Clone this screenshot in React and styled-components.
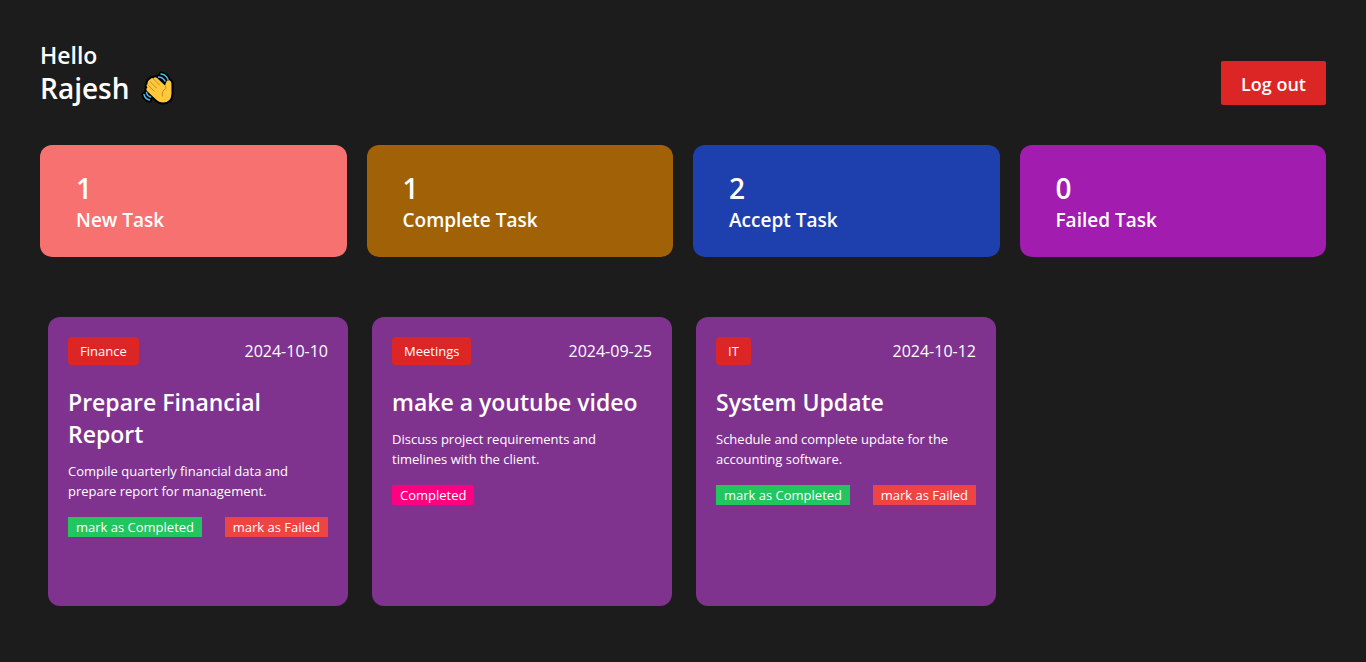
import React from "react";
import styled, { createGlobalStyle } from "styled-components";

const GlobalStyle = createGlobalStyle`
  *, *::before, *::after { box-sizing: border-box; margin: 0; }
  body {
    background: #1c1c1c;
    color: #fff;
    font-family: "Segoe UI", "Open Sans", "Noto Sans", sans-serif;
    font-size: 16px;
    line-height: 24px;
  }
  button { font: inherit; color: inherit; border: 0; cursor: pointer; }
`;

const Page = styled.main`
  min-height: 100vh;
  padding: 40px;
`;

const Header = styled.header`
  display: flex;
  align-items: flex-end;
  justify-content: space-between;
`;

const Greeting = styled.h1`
  font-size: 23px;
  font-weight: 600;
  line-height: 31px;
`;

const UserName = styled.span`
  display: flex;
  align-items: center;
  gap: 12px;
  font-size: 28px;
  line-height: 34px;
`;

const LogoutButton = styled.button`
  padding: 9px 20px 7px;
  border-radius: 2px;
  background: #dc2626;
  font-size: 18px;
  font-weight: 600;
  line-height: 28px;
`;

const Summary = styled.section`
  display: grid;
  grid-template-columns: repeat(4, 1fr);
  gap: 20px;
  margin-top: 40px;
`;

const SummaryCard = styled.article`
  padding: 25px 36px 23px;
  border-radius: 12px;
  background: ${(p) => p.$color};
`;

const Count = styled.h2`
  font-size: 28px;
  font-weight: 600;
  line-height: 36px;
`;

const SummaryLabel = styled.h3`
  font-size: 19px;
  font-weight: 600;
  line-height: 28px;
`;

const TaskList = styled.section`
  display: flex;
  gap: 24px;
  margin-top: 60px;
  padding: 0 8px;
  overflow-x: auto;
`;

const TaskCard = styled.article`
  flex: 0 0 300px;
  min-height: 289px;
  padding: 20px;
  border-radius: 12px;
  background: #80328f;
`;

const TaskMeta = styled.div`
  display: flex;
  align-items: center;
  justify-content: space-between;
`;

const Category = styled.span`
  padding: 4px 12px;
  border-radius: 4px;
  background: #dc2626;
  font-size: 13px;
  line-height: 20px;
`;

const DueDate = styled.time`
  font-size: 16px;
`;

const TaskTitle = styled.h2`
  margin-top: 21px;
  font-size: 23px;
  font-weight: 600;
  line-height: 32px;
`;

const Description = styled.p`
  margin-top: 11px;
  font-size: 13px;
  line-height: 20px;
`;

const Actions = styled.div`
  display: flex;
  justify-content: space-between;
  margin-top: 16px;
`;

const ActionButton = styled.button`
  padding: 0 8px;
  border-radius: ${(p) => (p.$rounded ? "2px" : "0")};
  background: ${(p) => p.$color};
  font-size: 13px;
  line-height: 20px;
`;

const WavingHand = () => (
  <svg width="34" height="34" viewBox="0 0 34 34" role="img" aria-label="Waving hand">
    <g fill="none" stroke="#000" strokeWidth="5" strokeLinecap="round" strokeLinejoin="round">
      <path d="M17.5 6 Q21.500 6 24 10 M20 3 Q25 3.500 27 8.500" />
      <path d="M5.500 21.500 Q6 25 9.500 26 M3 23.500 Q4 28 8.500 29" />
    </g>
    <path
      d="M9 8.500 Q10.500 6 12.500 7.500 Q14 5.500 16 7 L24 14.500 L25.500 10.500 Q26.500 8.500 29 9.500 Q30.500 10.500 30.500 13 L30.500 23 Q30 31.500 22 31.500 Q18 31.500 14.500 28 L6 20 Q4.500 18 6.500 16.500 Q4.500 14.500 6.500 13 Q6.500 9.500 9 8.500Z"
      fill="#ffc83d" stroke="#000" strokeWidth="4" strokeLinejoin="round" paintOrder="stroke"
    />
    <g fill="none" stroke="#c98d1e" strokeWidth="1" strokeLinecap="round">
      <path d="M12.500 8 L18.500 14 M9 10.500 L15.500 17 M6.500 13.500 L13 20" />
      <path d="M24.500 15 L25 17.500 Q20 20 21.500 25" />
    </g>
    <g fill="none" stroke="#50b8e7" strokeWidth="1.500" strokeLinecap="round">
      <path d="M17.5 6 Q21.500 6 24 10 M20 3 Q25 3.500 27 8.500" />
      <path d="M5.500 21.500 Q6 25 9.500 26 M3 23.500 Q4 28 8.500 29" />
    </g>
  </svg>
);

const summary = [
  { count: 1, label: "New Task", color: "#f87171" },
  { count: 1, label: "Complete Task", color: "#a16207" },
  { count: 2, label: "Accept Task", color: "#1e40af" },
  { count: 0, label: "Failed Task", color: "#a21caf" },
];

const tasks = [
  {
    category: "Finance",
    date: "2024-10-10",
    title: "Prepare Financial Report",
    description: "Compile quarterly financial data and prepare report for management.",
    completed: false,
  },
  {
    category: "Meetings",
    date: "2024-09-25",
    title: "make a youtube video",
    description: "Discuss project requirements and timelines with the client.",
    completed: true,
  },
  {
    category: "IT",
    date: "2024-10-12",
    title: "System Update",
    description: "Schedule and complete update for the accounting software.",
    completed: false,
  },
];

export default function App() {
  return (
    <>
      <GlobalStyle />
      <Page>
        <Header>
          <Greeting>
            Hello
            <UserName>
              Rajesh <WavingHand />
            </UserName>
          </Greeting>
          <LogoutButton type="button">Log out</LogoutButton>
        </Header>
        <Summary>
          {summary.map((item) => (
            <SummaryCard key={item.label} $color={item.color}>
              <Count>{item.count}</Count>
              <SummaryLabel>{item.label}</SummaryLabel>
            </SummaryCard>
          ))}
        </Summary>
        <TaskList>
          {tasks.map((task) => (
            <TaskCard key={task.title}>
              <TaskMeta>
                <Category>{task.category}</Category>
                <DueDate dateTime={task.date}>{task.date}</DueDate>
              </TaskMeta>
              <TaskTitle>{task.title}</TaskTitle>
              <Description>{task.description}</Description>
              <Actions>
                {task.completed ? (
                  <ActionButton type="button" $color="#ff0080" $rounded>Completed</ActionButton>
                ) : (
                  <>
                    <ActionButton type="button" $color="#22c55e">mark as Completed</ActionButton>
                    <ActionButton type="button" $color="#ef4444">mark as Failed</ActionButton>
                  </>
                )}
              </Actions>
            </TaskCard>
          ))}
        </TaskList>
      </Page>
    </>
  );
}
